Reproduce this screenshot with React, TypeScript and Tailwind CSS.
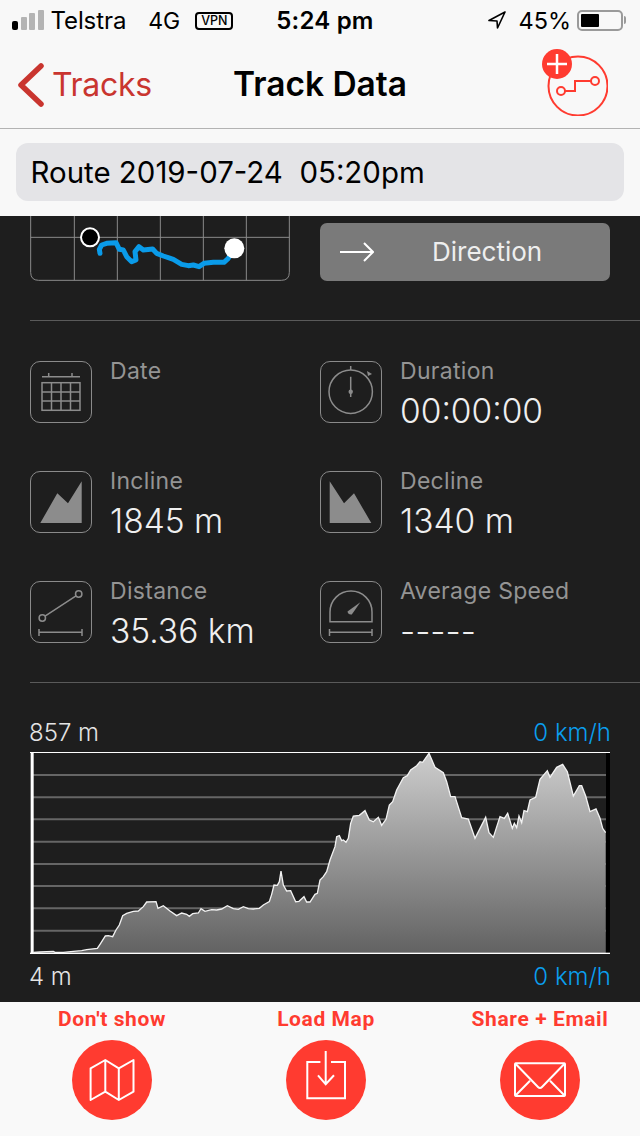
const font = "font-['Inter','Liberation_Sans',sans-serif]";

const left: number[][] = [[100,727],[120,726],[140,725],[160,724],[165,727],[190,727],[220,724],[245,722],[260,719],[292,715],[300,703],[316,678],[325,677],[338,680],[348,660],[358,645],[368,617],[380,610],[400,604],[415,603],[430,590],[440,576],[468,575],[474,595],[490,587],[510,603],[530,617],[545,609],[560,613],[568,619],[578,611],[595,609],[603,596],[615,604],[635,599],[650,600],[665,597],[682,587],[700,596],[715,598],[730,590],[745,596],[760,597],[778,595],[790,585],[808,575],[815,553],[822,525],[832,526],[838,515],[843,483],[850,525],[860,543],[872,542],[887,575],[897,574],[912,560],[920,576],[930,576],[945,553],[952,550]];
const right: number[][] = [[0,510],[10,500],[20,485],[30,450],[45,410],[50,380],[58,377],[65,392],[70,390],[78,397],[85,385],[92,340],[100,318],[118,316],[135,302],[148,330],[160,335],[175,322],[185,346],[198,328],[208,285],[218,275],[230,240],[250,203],[262,197],[272,180],[290,167],[300,155],[308,157],[327,130],[345,172],[370,188],[380,215],[392,260],[405,260],[425,323],[445,327],[465,385],[497,322],[507,368],[520,382],[540,320],[553,325],[563,310],[577,355],[583,340],[590,353],[597,318],[605,338],[612,302],[622,305],[630,270],[647,262],[660,208],[682,182],[690,202],[710,172],[728,163],[742,185],[760,258],[778,227],[785,227],[797,258],[810,305],[828,297],[840,325],[848,355],[857,368]];
const profile = [...left, ...right.map(([x, y]) => [x + 960, y])].map((p) => p.join(",")).join(" ");

function Chart() {
  return (
    <svg viewBox="90 126 1740 606" className="block w-[580px] h-[202px]">
      <defs>
        <linearGradient id="elev" x1="0" y1="0" x2="0" y2="1">
          <stop offset="0" stopColor="#cdcdcd" />
          <stop offset="1" stopColor="#626262" />
        </linearGradient>
      </defs>
      {[195, 262, 328, 395, 462, 528, 595, 662].map((y) => (
        <line key={y} x1="96" x2="1820" y1={y} y2={y} stroke="#666666" strokeWidth="6" />
      ))}
      <polygon points={`100,729 ${profile} 1817,729`} fill="url(#elev)" />
      <polyline points={profile} fill="none" stroke="#f2f2f2" strokeWidth="4" />
      <rect x="1818" y="126" width="12" height="606" fill="#000" />
      <rect x="90" y="126" width="1740" height="3" fill="#fff" />
      <rect x="90" y="728" width="1740" height="4" fill="#fff" />
      <rect x="92" y="126" width="9" height="606" fill="#fff" />
    </svg>
  );
}

function MapThumb() {
  const track = "300,130 298,118 305,105 320,100 348,98 358,118 370,120 380,140 395,155 408,150 405,125 417,110 430,120 458,117 470,130 490,138 520,148 545,163 565,167 580,165 597,170 612,160 640,157 672,157 685,145 703,115";
  return (
    <svg viewBox="90 18 780 195" className="block w-[260px] h-[65px] shrink-0">
      <g stroke="#8a8a8a" strokeWidth="3" fill="none">
        <path d="M92 18 V187 Q92 211 116 211 H844 Q868 211 868 187 V18" />
        <path d="M92 82 H868 M223 18 V211 M352 18 V211 M481 18 V211 M610 18 V211 M739 18 V211" />
      </g>
      <polyline points={track} fill="none" stroke="#0a9be9" strokeWidth="15" strokeLinejoin="round" strokeLinecap="round" />
      <circle cx="270" cy="82" r="27" fill="#000" stroke="#fff" strokeWidth="6" />
      <circle cx="703" cy="115" r="30" fill="#fff" />
    </svg>
  );
}

const stroke = { stroke: "#8c8c8c", strokeWidth: 1.5, fill: "none" };

const icons: Record<string, React.ReactNode> = {
  date: (
    <g {...stroke}>
      <path d="M12 15.7 H50 M18.7 12 V15.7 M42 12 V15.7" />
      <rect x="12" y="21.7" width="38" height="27.6" />
      <path d="M21.5 21.7 V49.3 M31 21.7 V49.3 M40.5 21.7 V49.3 M12 30.9 H50 M12 40.1 H50" />
    </g>
  ),
  duration: (
    <g {...stroke}>
      <circle cx="30.7" cy="30.7" r="21.7" />
      <path d="M30.7 5 V9 M30.7 15.7 V36" />
      <circle cx="30.7" cy="30.7" r="2.2" fill="#8c8c8c" stroke="none" />
      <path d="M47 10 L52 13 L48 15 Z" fill="#8c8c8c" stroke="none" />
    </g>
  ),
  incline: <polygon points="10.3,52 27.3,22.3 38,32.3 51.7,10.3 51.7,52" fill="#8c8c8c" />,
  decline: <polygon points="9.7,10.3 24,32.3 34,22.3 51.3,52 9.7,52" fill="#8c8c8c" />,
  distance: (
    <g {...stroke}>
      <circle cx="48.7" cy="13" r="3.2" />
      <circle cx="12.3" cy="37" r="3.2" />
      <path d="M15 35.2 L46 14.8 M9 51.3 H52 M9 48 V55 M52 48 V55" />
    </g>
  ),
  speed: (
    <g {...stroke}>
      <path d="M10 40.7 V31 A21 21 0 0 1 52 31 V40.7 Z" />
      <path d="M9.5 51.3 H52 M9.5 48 V55 M52 48 V55" />
      <path d="M40.3 21.3 L31.8 33.5 Q28 34 27.5 30.5 Z" fill="#8c8c8c" stroke="none" />
    </g>
  ),
};

function Stat({ icon, label, value }: { icon: string; label: string; value?: string }) {
  return (
    <div className="flex gap-[18px] h-[62px]">
      <div className="w-[62px] h-[62px] shrink-0 rounded-[10px] border border-[#8a8a8a]">
        <svg viewBox="1 1 60 60" className="block w-[60px] h-[60px]">{icons[icon]}</svg>
      </div>
      <div className="flex flex-col">
        <div className="text-[23px] leading-[20px] text-[#949494] tracking-[0.3px] whitespace-nowrap">{label}</div>
        {value && <div className="mt-[10px] text-[33.5px] leading-[40px] text-[#efefef] font-light whitespace-nowrap">{value}</div>}
      </div>
    </div>
  );
}

function Action({ label, children }: { label: string; children: React.ReactNode }) {
  return (
    <div className="flex flex-col items-center w-[160px] shrink-0">
      <div className="font-['Roboto',sans-serif] font-bold text-[21px] leading-[24px] tracking-[0.6px] text-[#ff3b30] whitespace-nowrap">{label}</div>
      <div className="mt-[9px] w-[80px] h-[80px] rounded-full bg-[#ff3b30]">
        <svg viewBox="0 0 80 80" className="block w-[80px] h-[80px]" fill="none" stroke="#fff" strokeWidth="2">{children}</svg>
      </div>
    </div>
  );
}

export default function App() {
  return (
    <div className={`${font} w-[640px] h-[1136px] flex flex-col overflow-hidden bg-[#f8f8f8]`}>
      {/* Status bar */}
      <div className="h-[40px] flex items-center pl-[12px] pr-[14px] pt-[2px] text-black relative shrink-0">
        <div className="flex items-end gap-[2.5px] h-[20px] mt-[-2px]">
          <div className="w-[6px] h-[9px] rounded-[2px] bg-black" />
          <div className="w-[6px] h-[13px] rounded-[1px] bg-[#b4b4b4]" />
          <div className="w-[6px] h-[17px] rounded-[1px] bg-[#b4b4b4]" />
          <div className="w-[6px] h-[20px] rounded-[1px] bg-[#b4b4b4]" />
        </div>
        <span className="ml-[7px] text-[24px] leading-none tracking-[-0.1px]">Telstra</span>
        <span className="ml-[22px] text-[23px] leading-none">4G</span>
        <span className="ml-[15px] w-[38px] h-[18px] flex items-center justify-center rounded-[4px] border-2 border-black text-[12.5px] leading-none font-medium">VPN</span>
        <span className="ml-[43px] text-[24px] leading-none font-semibold tracking-[0.2px]">5:24 pm</span>
        <div className="ml-auto flex items-center">
          <svg viewBox="0 0 18 18" className="w-[18px] h-[18px] mt-[-2px]" fill="none" stroke="#000" strokeWidth="1.6">
            <path d="M17 1 L1 9.5 L9 10 L9.5 17 Z" strokeLinejoin="round" />
          </svg>
          <span className="ml-[12px] text-[23.5px] leading-none">45%</span>
          <div className="ml-[6px] w-[46px] h-[21px] rounded-[5px] border-2 border-[#9a9a9a] p-[2px] mt-[-2px]">
            <div className="w-[18px] h-full rounded-[1px] bg-black" />
          </div>
          <div className="ml-[1px] w-[2px] h-[8px] rounded-r-sm bg-[#9a9a9a] mt-[-2px]" />
        </div>
      </div>

      {/* Nav bar */}
      <div className="h-[89px] shrink-0 border-b border-[#b3b3b3] grid grid-cols-[1fr_auto_1fr] items-center px-[18px] pt-[2px]">
        <div className="flex items-center gap-[8px] text-[#c9352f]">
          <svg viewBox="0 0 26 44" className="w-[26px] h-[44px]" fill="none" stroke="#c9352f" strokeWidth="5.5" strokeLinecap="round" strokeLinejoin="round">
            <path d="M23 3 L3 22 L23 41" />
          </svg>
          <span className="text-[32px] leading-none tracking-[-0.3px]">Tracks</span>
        </div>
        <div className="text-[33.5px] leading-none font-semibold text-black">Track Data</div>
        <div className="flex justify-end pr-[14px]">
          <svg viewBox="0 0 68 68" className="w-[68px] h-[68px] mt-[-6px]" fill="none" stroke="#ff3b30" strokeWidth="2">
            <circle cx="38" cy="38" r="29.5" />
            <circle cx="21" cy="43" r="4" />
            <circle cx="55" cy="33" r="4" />
            <path d="M25 43 H35 V33 H51" />
            <circle cx="17" cy="16" r="15" fill="#ff3b30" stroke="none" />
            <path d="M7 16 H27 M17 6 V26" stroke="#fff" strokeWidth="2.5" />
          </svg>
        </div>
      </div>

      {/* Title field */}
      <div className="h-[87px] shrink-0 px-[16px] pt-[14px]">
        <div className="h-[58px] rounded-[12px] bg-[#e4e4e7] flex items-center pl-[14.5px] pt-[2px] text-[29.45px] leading-none text-black whitespace-pre">
          Route 2019-07-24  05:20pm
        </div>
      </div>

      {/* Dark content */}
      <div className="flex-1 bg-[#1e1e1e] overflow-hidden">
        <div className="flex items-end h-[65px] pl-[30px]">
          <MapThumb />
          <div className="ml-[30px] w-[290px] h-[58px] rounded-[7px] bg-[#7a7a7a] flex items-center pl-[20px]">
            <svg viewBox="0 0 34 22" className="w-[34px] h-[22px] shrink-0" fill="none" stroke="#fff" strokeWidth="2">
              <path d="M0 11 H33 M24 2 L33 11 L24 20" />
            </svg>
            <span className="ml-[58px] text-[26px] leading-none text-[#eeeeee]">Direction</span>
          </div>
        </div>

        <div className="ml-[30px] mt-[39px] h-px bg-[#5a5a5a]" />

        <div className="grid grid-cols-[290px_1fr] gap-y-[48px] pl-[30px] pt-[40px]">
          <Stat icon="date" label="Date" />
          <Stat icon="duration" label="Duration" value="00:00:00" />
          <Stat icon="incline" label="Incline" value="1845 m" />
          <Stat icon="decline" label="Decline" value="1340 m" />
          <Stat icon="distance" label="Distance" value="35.36 km" />
          <Stat icon="speed" label="Average Speed" value="-----" />
        </div>

        <div className="ml-[30px] mt-[39px] h-px bg-[#5a5a5a]" />

        <div className="ml-[29px] mr-[29px] mt-[36px] flex justify-between text-[24px] leading-[28px]">
          <span className="text-[#e4e4e4] font-light">857 m</span>
          <span className="text-[#0a9eee] font-light">0 km/h</span>
        </div>
        <div className="mx-[30px] mt-[5px]">
          <Chart />
        </div>
        <div className="ml-[29px] mr-[29px] mt-[9px] flex justify-between text-[24px] leading-[28px]">
          <span className="text-[#e4e4e4] font-light">4 m</span>
          <span className="text-[#0a9eee] font-light">0 km/h</span>
        </div>
      </div>

      {/* Bottom actions */}
      <div className="h-[134px] shrink-0 bg-[#f9f9f9] pt-[5px] flex gap-[54px] px-[32px]">
        <Action label="Don't show">
          <path d="M18.6 28.3 L33.3 20 L46.8 28.3 L61.5 20 V51.7 L46.8 60 L33.3 51.7 L18.6 60 Z M33.3 20 V51.7 M46.8 28.3 V60" strokeLinejoin="round" />
        </Action>
        <Action label="Load Map">
          <path d="M34.4 22 H21.3 V58.3 H59 V22 H45" />
          <path d="M39.7 11 V44.3 M32 35.3 L39.7 44.3 L48 35.3" />
        </Action>
        <Action label="Share + Email">
          <rect x="15" y="23.3" width="50" height="32.7" rx="1" />
          <path d="M15 23.3 L38 47 Q40 49 42 47 L65 23.3 M30 40.7 L15 56 M50 40.7 L65 56" />
        </Action>
      </div>
    </div>
  );
}
